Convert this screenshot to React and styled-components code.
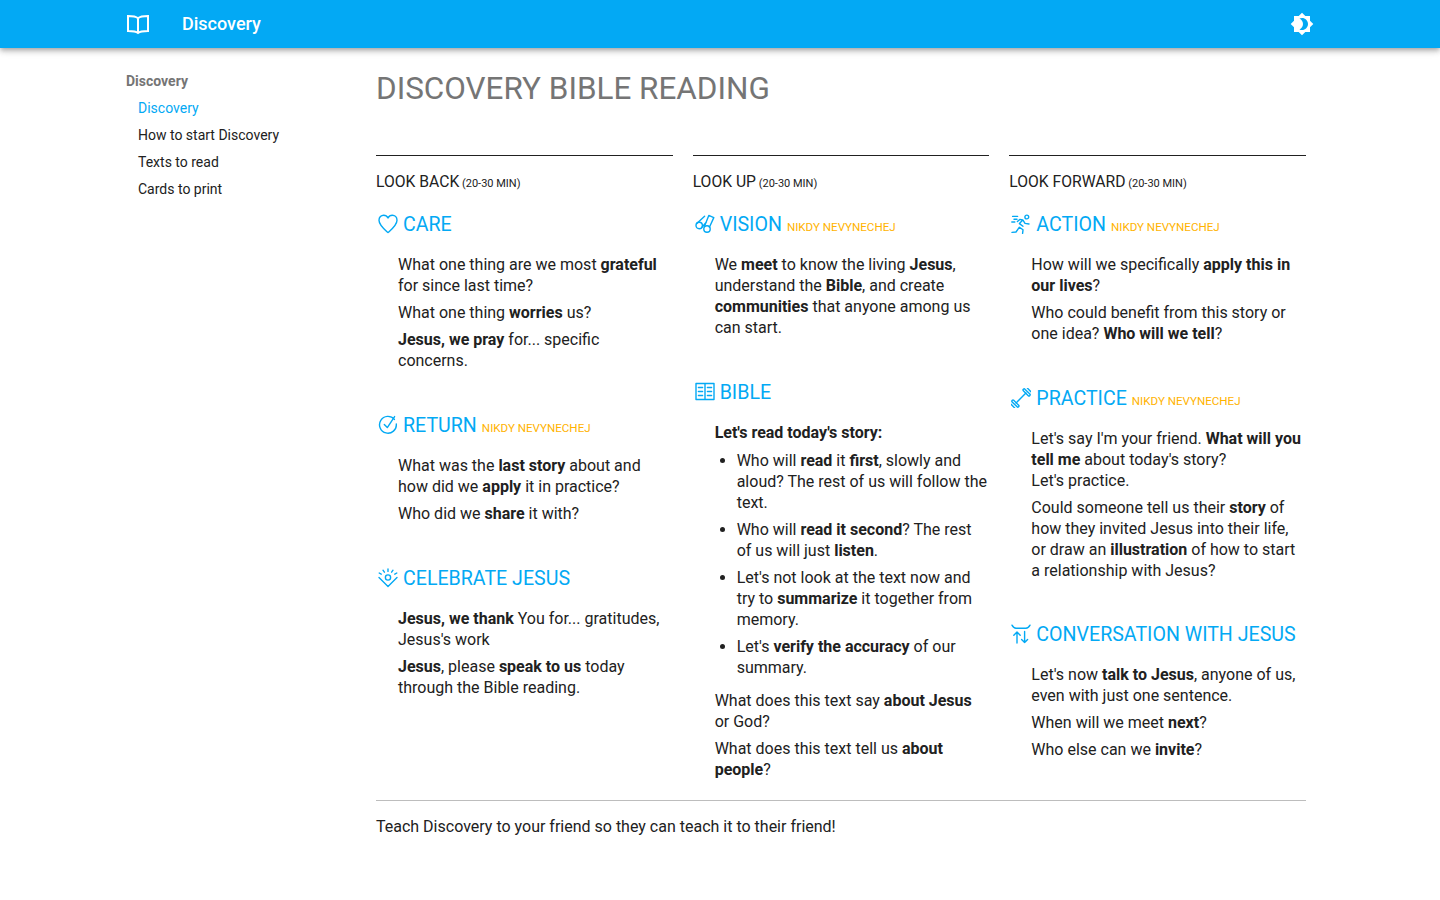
import styled, { createGlobalStyle } from "styled-components";
import { MdBrightness4 } from "react-icons/md";

const GlobalStyle = createGlobalStyle`
  body {
    margin: 0;
    background: #fff;
    color: #212121;
    font-family: Roboto, "Liberation Sans", sans-serif;
    font-size: 16px;
    line-height: 21px;
  }
`;

const TopBar = styled.header`
  height: 48px;
  background: #03a9f4;
  box-shadow: 0 2px 4px -1px rgba(0, 0, 0, 0.2), 0 4px 5px 0 rgba(0, 0, 0, 0.14), 0 1px 10px 0 rgba(0, 0, 0, 0.12);
  display: flex;
  align-items: center;
  padding: 0 126px 0 126px;
  color: #fff;
`;

const BarTitle = styled.div`
  font-size: 18px;
  font-weight: 500;
  margin-left: 32px;
  padding-bottom: 2px;
  flex: 1;
`;

const Page = styled.div`
  display: flex;
  padding-left: 126px;
`;

const Sidebar = styled.nav`
  width: 250px;
  flex: none;
  padding-top: 23px;
  font-size: 14px;
`;

const NavTitle = styled.div`
  height: 21px;
  line-height: 21px;
  font-weight: 700;
  color: #757575;
  margin-bottom: 6px;
`;

const NavItem = styled.div`
  height: 21px;
  line-height: 21px;
  margin: 0 0 6px 12px;
  color: ${(props) => (props.$active ? "#03a9f4" : "#212121")};
`;

const Main = styled.main`
  width: 930px;
  flex: none;
`;

const PageTitle = styled.h1`
  margin: 21px 0 46px;
  font-size: 31.44px;
  line-height: 40px;
  font-weight: 400;
  color: #757575;
`;

const Columns = styled.div`
  display: grid;
  grid-template-columns: repeat(3, 1fr);
  column-gap: 20px;
`;

const Column = styled.section`
  border-top: 1px solid #212121;
  padding-top: 15px;
`;

const ColumnTitle = styled.div`
  height: 21px;
  line-height: 21px;
  font-size: 15.7px;
  margin-bottom: 18px;
`;

const Small = styled.small`
  font-size: 11px;
`;

const Block = styled.div`
  margin-bottom: ${(props) => props.$gap || 40}px;
  &:last-child {
    margin-bottom: 0;
  }
`;

const Heading = styled.h3`
  display: flex;
  align-items: baseline;
  margin: 0 0 16px;
  padding-left: 2px;
  height: 28px;
  line-height: 30px;
  font-size: 19.6px;
  font-weight: 400;
  color: #03a9f4;
  white-space: nowrap;
`;

const IconSlot = styled.svg`
  width: 20px;
  height: 20px;
  flex: none;
  align-self: center;
  margin: 0 5px 1px 0;
  fill: none;
  stroke: currentColor;
  stroke-width: 1.4;
  stroke-linecap: round;
  stroke-linejoin: round;
`;

const Note = styled.span`
  font-size: 11.6px;
  color: #ffb300;
  margin-left: 5px;
`;

const Body = styled.div`
  padding-left: 22px;
`;

const Text = styled.p`
  margin: 0 0 6px;
`;

const List = styled.ul`
  margin: 7px 0 12px;
  padding-left: 22px;
`;

const Item = styled.li`
  margin-bottom: 6px;
  &:last-child {
    margin-bottom: 0;
  }
`;

const Footer = styled.footer`
  margin-top: 14px;
  border-top: 1px solid #bdbdbd;
  padding-top: 15px;
`;

const BookIcon = styled.svg`
  width: 24px;
  height: 24px;
  flex: none;
  fill: none;
  stroke: #fff;
  stroke-width: 2;
`;

const ThemeIcon = styled(MdBrightness4)`
  width: 24px;
  height: 24px;
  color: #fff;
`;

const Heart = () => (
  <IconSlot viewBox="0 0 20 20">
    <path d="M10 18.6C6 15 1 11 1 6.2 1 3.2 3.200 1.200 5.700 1.200c1.900 0 3.400 1 4.300 2.800.9-1.800 2.400-2.800 4.300-2.800 2.500 0 4.700 2 4.700 5 0 4.800-5 8.800-9 12.400z" />
  </IconSlot>
);

const CircleCheck = () => (
  <IconSlot viewBox="0 0 20 20">
    <path d="M16.400 4.400A8.400 8.400 0 1 0 18.300 9" />
    <path d="M6.300 9.600l3 3L16.600 1.600" />
  </IconSlot>
);

const Praise = () => (
  <IconSlot viewBox="0 0 20 20">
    <circle cx="10" cy="9.500" r="2.600" />
    <path d="M1 9.500l9 9 9-9M5 2.200l1.400 2M10 1v2.400M15 2.200l-1.400 2M1.200 5l2 1.200M18.800 5l-2 1.200" />
  </IconSlot>
);

const Binoculars = () => (
  <IconSlot viewBox="0 0 20 20">
    <circle cx="4.200" cy="11.500" r="3.200" />
    <circle cx="12" cy="15" r="3.200" />
    <path d="M1.800 9.400L9.600 2.200M6.800 13.400L11.400 8M9.400 12.400L13.800 1.400l5 2.200-4.400 9.600" />
  </IconSlot>
);

const OpenBook = () => (
  <IconSlot viewBox="0 0 20 20">
    <path d="M1 1.500h18v16H1zM10 1.500v16" />
    <path d="M3.400 5.500h4.200M3.400 9.500h4.200M3.400 13.500h4.200M12.400 5.500h4.200M12.400 9.500h4.200M12.400 13.500h4.200" />
  </IconSlot>
);

const Runner = () => (
  <IconSlot viewBox="0 0 20 20">
    <circle cx="15.800" cy="3" r="1.900" />
    <path d="M1 18.400l4-.4 3.400-4.800 3.600 2.600-.4 3.600M12 12.200L8.400 9.600l3.400-3.600-3-.6-2.400 2.200M12 6.200l2 3.200 4 .6M1.600 2.400h5M3 5.200h3M.8 8h3" />
  </IconSlot>
);

const Dumbbell = () => (
  <IconSlot viewBox="0 0 20 20">
    <g transform="rotate(-45 10 10)">
      <path d="M3 10h14" />
      <rect x="1" y="5.500" width="2.200" height="9" rx="1" />
      <rect x="16.800" y="5.500" width="2.200" height="9" rx="1" />
      <path d="M-1.500 7.500v5M21.500 7.500v5" />
    </g>
  </IconSlot>
);

const Talk = () => (
  <IconSlot viewBox="0 0 20 20">
    <path d="M1 1.200c1.400 2.600 3 3 4 3h10c1 0 2.600-.4 4-3" />
    <path d="M6 19V8.200M2.800 11.200L6 8l3.200 3.200M13.600 7.400V18.600M10.600 15.600l3 3 3-3" />
  </IconSlot>
);

export default function App() {
  return (
    <>
      <GlobalStyle />
      <TopBar>
        <BookIcon viewBox="0 0 24 24">
          <path d="M12 6.200C10.400 4.800 8 4 2 4v15c6 0 8.400 .6 10 2 1.600-1.400 4-2 10-2V4c-6 0-8.400 .8-10 2.200zM12 6.200V20" />
        </BookIcon>
        <BarTitle>Discovery</BarTitle>
        <ThemeIcon />
      </TopBar>
      <Page>
        <Sidebar>
          <NavTitle>Discovery</NavTitle>
          <NavItem $active>Discovery</NavItem>
          <NavItem>How to start Discovery</NavItem>
          <NavItem>Texts to read</NavItem>
          <NavItem>Cards to print</NavItem>
        </Sidebar>
        <Main>
          <PageTitle>DISCOVERY BIBLE READING</PageTitle>
          <Columns>
            <Column>
              <ColumnTitle>LOOK BACK<Small> (20-30 MIN)</Small></ColumnTitle>
              <Block>
                <Heading><Heart />CARE</Heading>
                <Body>
                  <Text>What one thing are we most <b>grateful</b> for since last time?</Text>
                  <Text>What one thing <b>worries</b> us?</Text>
                  <Text><b>Jesus, we pray</b> for... specific concerns.</Text>
                </Body>
              </Block>
              <Block>
                <Heading><CircleCheck />RETURN<Note>NIKDY NEVYNECHEJ</Note></Heading>
                <Body>
                  <Text>What was the <b>last story</b> about and how did we <b>apply</b> it in practice?</Text>
                  <Text>Who did we <b>share</b> it with?</Text>
                </Body>
              </Block>
              <Block>
                <Heading><Praise />CELEBRATE JESUS</Heading>
                <Body>
                  <Text><b>Jesus, we thank</b> You for... gratitudes, Jesus's work</Text>
                  <Text><b>Jesus</b>, please <b>speak to us</b> today through the Bible reading.</Text>
                </Body>
              </Block>
            </Column>
            <Column>
              <ColumnTitle>LOOK UP<Small> (20-30 MIN)</Small></ColumnTitle>
              <Block>
                <Heading><Binoculars />VISION<Note>NIKDY NEVYNECHEJ</Note></Heading>
                <Body>
                  <Text>We <b>meet</b> to know the living <b>Jesus</b>, understand the <b>Bible</b>, and create <b>communities</b> that anyone among us can start.</Text>
                </Body>
              </Block>
              <Block>
                <Heading><OpenBook />BIBLE</Heading>
                <Body>
                  <Text><b>Let's read today's story:</b></Text>
                  <List>
                    <Item>Who will <b>read</b> it <b>first</b>, slowly and aloud? The rest of us will follow the text.</Item>
                    <Item>Who will <b>read it second</b>? The rest of us will just <b>listen</b>.</Item>
                    <Item>Let's not look at the text now and try to <b>summarize</b> it together from memory.</Item>
                    <Item>Let's <b>verify the accuracy</b> of our summary.</Item>
                  </List>
                  <Text>What does this text say <b>about Jesus</b> or God?</Text>
                  <Text>What does this text tell us <b>about people</b>?</Text>
                </Body>
              </Block>
            </Column>
            <Column>
              <ColumnTitle>LOOK FORWARD<Small> (20-30 MIN)</Small></ColumnTitle>
              <Block>
                <Heading><Runner />ACTION<Note>NIKDY NEVYNECHEJ</Note></Heading>
                <Body>
                  <Text>How will we specifically <b>apply this in our lives</b>?</Text>
                  <Text>Who could benefit from this story or one idea? <b>Who will we tell</b>?</Text>
                </Body>
              </Block>
              <Block $gap={39}>
                <Heading><Dumbbell />PRACTICE<Note>NIKDY NEVYNECHEJ</Note></Heading>
                <Body>
                  <Text>Let's say I'm your friend. <b>What will you tell me</b> about today's story?<br />Let's practice.</Text>
                  <Text>Could someone tell us their <b>story</b> of how they invited Jesus into their life, or draw an <b>illustration</b> of how to start a relationship with Jesus?</Text>
                </Body>
              </Block>
              <Block>
                <Heading><Talk />CONVERSATION WITH JESUS</Heading>
                <Body>
                  <Text>Let's now <b>talk to Jesus</b>, anyone of us, even with just one sentence.</Text>
                  <Text>When will we meet <b>next</b>?</Text>
                  <Text>Who else can we <b>invite</b>?</Text>
                </Body>
              </Block>
            </Column>
          </Columns>
          <Footer>Teach Discovery to your friend so they can teach it to their friend!</Footer>
        </Main>
      </Page>
    </>
  );
}
